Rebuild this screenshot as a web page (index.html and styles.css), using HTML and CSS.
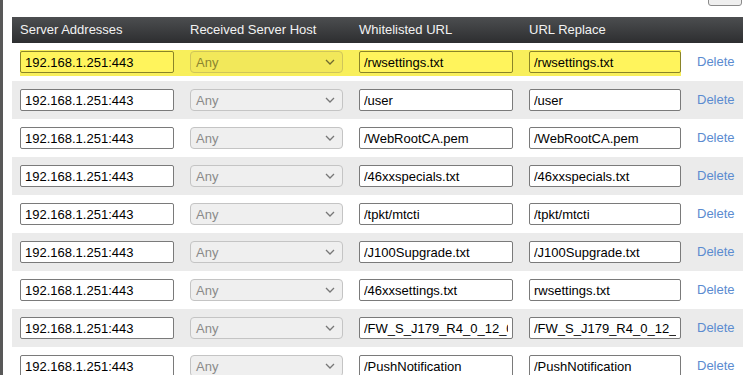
FILE: index.html
```html
<!DOCTYPE html>
<html>
<head>
<meta charset="utf-8">
<link rel="stylesheet" href="styles.css">
</head>
<body>
<div class="strip"></div>
<div class="main">
  <div class="toolbar"><button class="add">Add</button></div>
  <div class="table">
    <div class="head">
      <div class="hc c1">Server Addresses</div>
      <div class="hc c2">Received Server Host</div>
      <div class="hc c3">Whitelisted URL</div>
      <div class="hc c4">URL Replace</div>
    </div>

    <div class="row">
      <div class="fields hl">
        <input class="txt w1" value="192.168.1.251:443">
        <div class="sel"><span>Any</span><svg width="10" height="6" viewBox="0 0 10 6"><path d="M1 1 L5 5 L9 1" fill="none" stroke="#6f6a30" stroke-width="1.3"/></svg></div>
        <input class="txt w3" value="/rwsettings.txt">
        <input class="txt w4" value="/rwsettings.txt">
      </div>
      <a class="del">Delete</a>
    </div>

    <div class="row alt">
      <div class="fields">
        <input class="txt w1" value="192.168.1.251:443">
        <div class="sel"><span>Any</span><svg width="10" height="6" viewBox="0 0 10 6"><path d="M1 1 L5 5 L9 1" fill="none" stroke="#777" stroke-width="1.3"/></svg></div>
        <input class="txt w3" value="/user">
        <input class="txt w4" value="/user">
      </div>
      <a class="del">Delete</a>
    </div>

    <div class="row">
      <div class="fields">
        <input class="txt w1" value="192.168.1.251:443">
        <div class="sel"><span>Any</span><svg width="10" height="6" viewBox="0 0 10 6"><path d="M1 1 L5 5 L9 1" fill="none" stroke="#777" stroke-width="1.3"/></svg></div>
        <input class="txt w3" value="/WebRootCA.pem">
        <input class="txt w4" value="/WebRootCA.pem">
      </div>
      <a class="del">Delete</a>
    </div>

    <div class="row alt">
      <div class="fields">
        <input class="txt w1" value="192.168.1.251:443">
        <div class="sel"><span>Any</span><svg width="10" height="6" viewBox="0 0 10 6"><path d="M1 1 L5 5 L9 1" fill="none" stroke="#777" stroke-width="1.3"/></svg></div>
        <input class="txt w3" value="/46xxspecials.txt">
        <input class="txt w4" value="/46xxspecials.txt">
      </div>
      <a class="del">Delete</a>
    </div>

    <div class="row">
      <div class="fields">
        <input class="txt w1" value="192.168.1.251:443">
        <div class="sel"><span>Any</span><svg width="10" height="6" viewBox="0 0 10 6"><path d="M1 1 L5 5 L9 1" fill="none" stroke="#777" stroke-width="1.3"/></svg></div>
        <input class="txt w3" value="/tpkt/mtcti">
        <input class="txt w4" value="/tpkt/mtcti">
      </div>
      <a class="del">Delete</a>
    </div>

    <div class="row alt">
      <div class="fields">
        <input class="txt w1" value="192.168.1.251:443">
        <div class="sel"><span>Any</span><svg width="10" height="6" viewBox="0 0 10 6"><path d="M1 1 L5 5 L9 1" fill="none" stroke="#777" stroke-width="1.3"/></svg></div>
        <input class="txt w3" value="/J100Supgrade.txt">
        <input class="txt w4" value="/J100Supgrade.txt">
      </div>
      <a class="del">Delete</a>
    </div>

    <div class="row">
      <div class="fields">
        <input class="txt w1" value="192.168.1.251:443">
        <div class="sel"><span>Any</span><svg width="10" height="6" viewBox="0 0 10 6"><path d="M1 1 L5 5 L9 1" fill="none" stroke="#777" stroke-width="1.3"/></svg></div>
        <input class="txt w3" value="/46xxsettings.txt">
        <input class="txt w4" value="rwsettings.txt">
      </div>
      <a class="del">Delete</a>
    </div>

    <div class="row alt">
      <div class="fields">
        <input class="txt w1" value="192.168.1.251:443">
        <div class="sel"><span>Any</span><svg width="10" height="6" viewBox="0 0 10 6"><path d="M1 1 L5 5 L9 1" fill="none" stroke="#777" stroke-width="1.3"/></svg></div>
        <input class="txt w3" value="/FW_S_J179_R4_0_12_0_2.bin">
        <input class="txt w4" value="/FW_S_J179_R4_0_12_0_2.bin">
      </div>
      <a class="del">Delete</a>
    </div>

    <div class="row">
      <div class="fields">
        <input class="txt w1" value="192.168.1.251:443">
        <div class="sel"><span>Any</span><svg width="10" height="6" viewBox="0 0 10 6"><path d="M1 1 L5 5 L9 1" fill="none" stroke="#777" stroke-width="1.3"/></svg></div>
        <input class="txt w3" value="/PushNotification">
        <input class="txt w4" value="/PushNotification">
      </div>
      <a class="del">Delete</a>
    </div>
  </div>
</div>
</body>
</html>
```

FILE: styles.css
```css
html, body {
  margin: 0;
  padding: 0;
  height: 375px;
  overflow: hidden;
  background: #fff;
}
body {
  display: flex;
  font-family: "Liberation Sans", Arial, sans-serif;
  font-size: 13px;
}
.strip {
  width: 3px;
  flex: none;
  background: #585858;
}
.main {
  flex: 1;
  padding-left: 9px;
  min-width: 0;
}
.toolbar {
  height: 6px;
  overflow: hidden;
  display: flex;
  justify-content: flex-end;
  align-items: flex-end;
  padding-right: 1px;
}
.add {
  flex: none;
  height: 20px;
  width: 34px;
  padding: 0;
  border: 1px solid #8a8a8a;
  border-radius: 3px;
  background: #efefef;
  font-family: "Liberation Sans", Arial, sans-serif;
  font-size: 12px;
  color: #111;
}
.table {
  margin-top: 11px;
}
.head {
  display: flex;
  height: 26px;
  background: linear-gradient(#4c4e50, #2d2e30);
  color: #f2f2f2;
  line-height: 26px;
  padding-left: 8px;
}
.hc {
  flex: none;
  white-space: nowrap;
}
.c1 { width: 170px; }
.c2 { width: 169px; }
.c3 { width: 170px; }
.c4 { width: 168px; }
.row {
  display: flex;
  align-items: flex-start;
  height: 38px;
  padding-left: 8px;
  box-sizing: border-box;
  background: #fff;
}
.row.alt {
  background: #ebebeb;
}
.fields {
  display: flex;
  gap: 16px;
  margin-top: 7px;
  padding: 1px 0 3px;
}
.fields.hl {
  background: #f8ef5b;
}
.txt {
  box-sizing: border-box;
  height: 22px;
  margin: 0;
  border: 1px solid #7a7a7a;
  border-radius: 2px;
  padding: 0 4px;
  background: #fff;
  color: #000;
  font-family: "Liberation Sans", Arial, sans-serif;
  font-size: 13px;
}
.w1 { width: 154px; }
.w3 { width: 154px; }
.w4 { width: 152px; }
.hl .txt {
  background: #fff45c;
  border-color: #8a8428;
}
.sel {
  box-sizing: border-box;
  width: 153px;
  height: 22px;
  border: 1px solid #c4c4c4;
  border-radius: 4px;
  background: #efefef;
  color: #8a8a8a;
  display: flex;
  align-items: center;
  justify-content: space-between;
  padding: 0 7px 0 5px;
}
.hl .sel {
  background: #f2e85a;
  border-color: #cfc55a;
  color: #8c8530;
}
.del {
  margin-left: 16px;
  margin-top: 8px;
  line-height: 22px;
  color: #5b8bd0;
  white-space: nowrap;
}
```
